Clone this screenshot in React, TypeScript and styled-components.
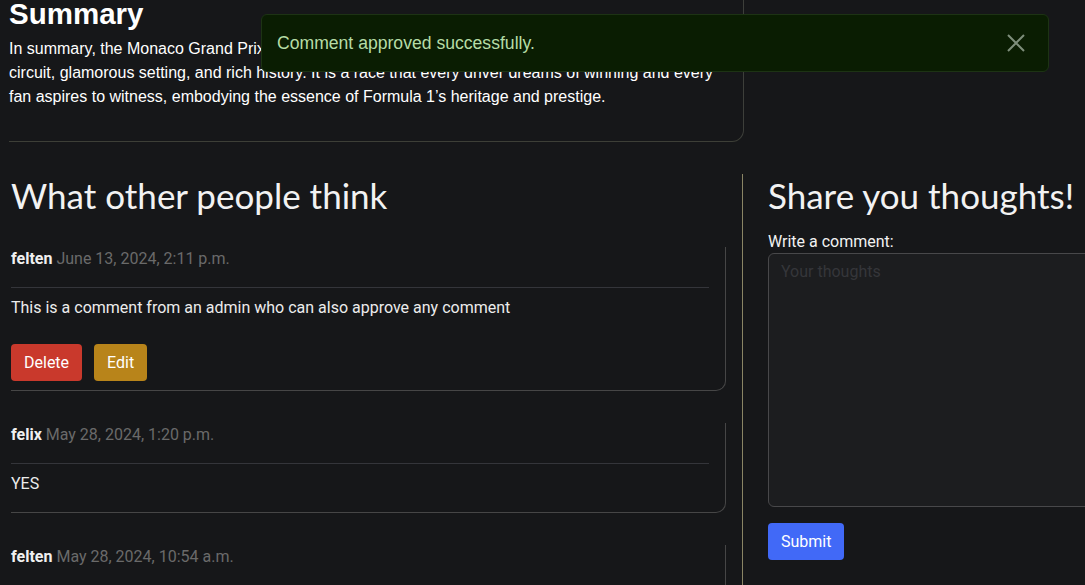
import styled, { createGlobalStyle } from 'styled-components';

const GlobalStyle = createGlobalStyle`
  html, body {
    margin: 0;
    padding: 0;
    background: #161719;
    overflow: hidden;
  }
  body {
    font-family: Roboto, "Liberation Sans", sans-serif;
    color: #e6e6e6;
  }
`;

type Comment = {
  author: string;
  date: string;
  text: string;
  canEdit?: boolean;
};

const comments: Comment[] = [
  {
    author: 'felten',
    date: 'June 13, 2024, 2:11 p.m.',
    text: 'This is a comment from an admin who can also approve any comment',
    canEdit: true,
  },
  { author: 'felix', date: 'May 28, 2024, 1:20 p.m.', text: 'YES' },
  { author: 'felten', date: 'May 28, 2024, 10:54 a.m.', text: 'Great race this year!' },
];

export default function App() {
  return (
    <>
      <GlobalStyle />
      <Page>
        <SummaryCard>
          <SummaryTitle>Summary</SummaryTitle>
          <SummaryText>
            In summary, the Monaco Grand Prix stands as a jewel of the motorsport calendar, famed for its tight
            circuit, glamorous setting, and rich history. It is a race that every driver dreams of winning and every
            fan aspires to witness, embodying the essence of Formula 1’s heritage and prestige.
          </SummaryText>
        </SummaryCard>

        <Columns>
          <CommentsColumn>
            <SectionHeading>What other people think</SectionHeading>
            <CommentList>
              {comments.map((c, i) => (
                <CommentCard key={i}>
                  <Meta>
                    <Author>{c.author}</Author> <Date>{c.date}</Date>
                  </Meta>
                  <Divider />
                  <CommentText>{c.text}</CommentText>
                  {c.canEdit && (
                    <Actions>
                      <ActionButton $tone="danger">Delete</ActionButton>
                      <ActionButton $tone="warning">Edit</ActionButton>
                    </Actions>
                  )}
                </CommentCard>
              ))}
            </CommentList>
          </CommentsColumn>

          <FormColumn>
            <SectionHeading>Share you thoughts!</SectionHeading>
            <Label htmlFor="comment">Write a comment:</Label>
            <TextArea id="comment" placeholder="Your thoughts" />
            <SubmitButton>Submit</SubmitButton>
          </FormColumn>
        </Columns>
      </Page>

      <Toast>
        <ToastText>Comment approved successfully.</ToastText>
        <CloseButton aria-label="Close">
          <svg width="20" height="20" viewBox="0 0 20 20" fill="none">
            <path d="M2 2 L18 18 M18 2 L2 18" stroke="#7e8e7b" strokeWidth="2" />
          </svg>
        </CloseButton>
      </Toast>
    </>
  );
}

const Page = styled.main`
  width: 1160px;
  padding-left: 9px;
`;

const SummaryCard = styled.section`
  width: 718px;
  padding: 0 16px 32px 0;
  border-right: 1px solid #3d3f3a;
  border-bottom: 1px solid #3d3f37;
  border-bottom-right-radius: 12px;
`;

const SummaryTitle = styled.h2`
  margin: -3px 0 0;
  font-family: "Liberation Sans", Arial, sans-serif;
  font-weight: 700;
  font-size: 29.5px;
  line-height: 33px;
  color: #ffffff;
`;

const SummaryText = styled.p`
  margin: 7px 0 0;
  font-family: "Liberation Sans", Arial, sans-serif;
  font-size: 16px;
  line-height: 24px;
  color: #ffffff;
`;

const Columns = styled.div`
  display: grid;
  grid-template-columns: 734px 1fr;
  margin-top: 32px;
`;

const CommentsColumn = styled.div`
  padding: 0 16px 0 2px;
  border-right: 1px solid #8a8565;
`;

const SectionHeading = styled.h1`
  margin: 0;
  padding-bottom: 2px;
  font-family: Lato, "Open Sans", sans-serif;
  font-weight: 400;
  font-size: 35px;
  line-height: 42px;
  color: #f2f2f2;
`;

const CommentList = styled.div`
  display: flex;
  flex-direction: column;
  gap: 32px;
  margin-top: 29px;
`;

const CommentCard = styled.article`
  padding-right: 16px;
  border-right: 1px solid #464646;
  border-bottom: 1px solid #464646;
  border-bottom-right-radius: 10px;
`;

const Meta = styled.div`
  padding-top: 1px;
  font-size: 16px;
  line-height: 22px;
`;

const Author = styled.strong`
  font-weight: 700;
  color: #f0f0f0;
`;

const Date = styled.span`
  color: #6a6a6a;
`;

const Divider = styled.hr`
  margin: 17px 0 0;
  border: none;
  border-top: 1px solid #34353a;
`;

const CommentText = styled.p`
  margin: 9px 0 17px;
  font-size: 16px;
  line-height: 22px;
  color: #ececec;
`;

const ActionButton = styled.button<{ $tone: 'danger' | 'warning' }>`
  height: 37px;
  padding: 0 13px;
  border: none;
  border-radius: 4px;
  font-family: Roboto, sans-serif;
  font-size: 16px;
  color: #ffffff;
  background: ${({ $tone }) => ($tone === 'danger' ? '#c9392c' : '#b8841a')};
`;

const Actions = styled.div`
  display: flex;
  gap: 12px;
  margin: 25px 0 9px;
`;

const FormColumn = styled.div`
  display: flex;
  flex-direction: column;
  align-items: flex-start;
  padding-left: 25px;
`;

const Label = styled.label`
  margin-top: 14px;
  font-size: 16px;
  line-height: 20px;
  color: #f2f2f2;
`;

const TextArea = styled.textarea`
  box-sizing: border-box;
  width: 360px;
  height: 254px;
  margin-top: 1px;
  padding: 8px 12px;
  resize: none;
  background: #1c1d1f;
  border: 1px solid #48484a;
  border-radius: 6px;
  font-family: Roboto, sans-serif;
  font-size: 16px;
  color: #e6e6e6;

  &::placeholder {
    color: #35363a;
  }
`;

const SubmitButton = styled.button`
  height: 37px;
  margin-top: 16px;
  padding: 0 13px;
  border: none;
  border-radius: 4px;
  background: #4169f7;
  font-family: Roboto, sans-serif;
  font-size: 16px;
  color: #ffffff;
`;

const Toast = styled.div`
  position: fixed;
  top: 14px;
  left: 261px;
  box-sizing: border-box;
  width: 788px;
  height: 58px;
  display: flex;
  align-items: center;
  justify-content: space-between;
  padding: 0 22px 0 15px;
  background: #0a1d02;
  border: 1px solid #1d3314;
  border-radius: 6px;
`;

const ToastText = styled.span`
  font-family: "Liberation Sans", Arial, sans-serif;
  font-size: 17.6px;
  color: #b6dca6;
`;

const CloseButton = styled.button`
  display: flex;
  padding: 0;
  background: none;
  border: none;
`;
